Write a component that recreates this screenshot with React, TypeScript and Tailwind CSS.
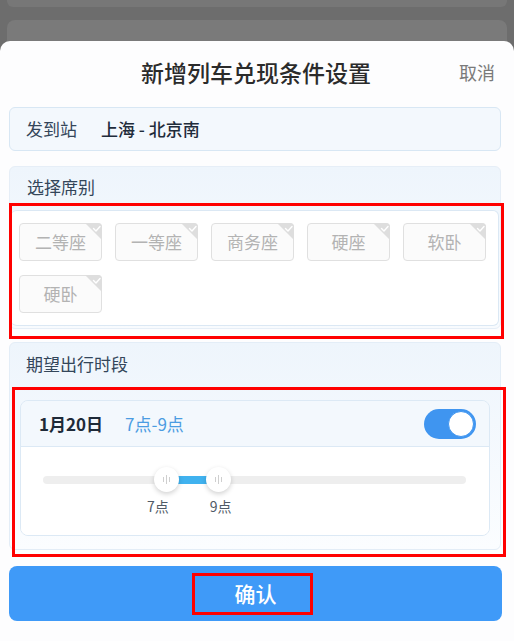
import React from "react";

const seats = ["二等座", "一等座", "商务座", "硬座", "软卧", "硬卧"];

const SeatChip = ({ label }: { label: string }) => {
  return (
    <div className="relative w-[83px] h-[38px] flex items-center justify-center rounded-[4px] border border-[#e0e0e0] bg-[#fbfbfb] text-[17px] text-[#b3b3b3]">
      {label}
      {/* corner tick */}
      <svg className="absolute top-[-1px] right-[-1px]" width="17" height="17" viewBox="0 0 17 17">
        <path d="M0 0 H13 Q17 0 17 4 V17 Z" fill="#dedede" />
        <path d="M8.5 5.5 L11 8 L15 3.5" fill="none" stroke="#ffffff" strokeWidth="1.4" strokeLinecap="round" strokeLinejoin="round" />
      </svg>
    </div>
  );
};

const Thumb = () => {
  return (
    <div className="w-[25px] h-[25px] shrink-0 rounded-full bg-white shadow-[0_2px_5px_rgba(0,0,0,0.18)] flex items-center justify-center gap-[2px] z-10">
      <span className="w-px h-[5px] bg-[#cfcfcf]" />
      <span className="w-px h-[9px] bg-[#cfcfcf]" />
      <span className="w-px h-[5px] bg-[#cfcfcf]" />
    </div>
  );
};

const App = () => {
  return (
    <div
      className="relative w-[514px] h-[641px] overflow-hidden bg-[#6d6d6d] flex flex-col"
      style={{ fontFamily: '"Noto Sans CJK SC", "Noto Sans", sans-serif' }}
    >
      {/* Backdrop cards */}
      <div className="h-[7px] mx-[7px] bg-[#777777] rounded-b-md" />
      <div className="h-[13px]" />
      <div className="h-[22px] mx-[7px] bg-[#7a7a7a] rounded-t-lg" />

      {/* Sheet */}
      <div className="flex-1 bg-[#fdfdfe] rounded-t-[10px] pl-[9px] pr-[13px] -mt-[1px]">
        {/* Header */}
        <div className="grid grid-cols-[1fr_auto_1fr] items-center pt-[17px] pb-[21px]">
          <div />
          <div className="text-[23px] leading-[28px] font-medium text-[#2b2b2b] pl-[2px]">新增列车兑现条件设置</div>
          <div className="flex justify-end pr-[6px] text-[18px] leading-[28px] text-[#7a7a7a]">取消</div>
        </div>

        {/* Station */}
        <div className="h-[44px] flex items-center gap-[24px] pl-[16px] rounded-[6px] border border-[#d8e7f4] bg-[#f3f8fd]">
          <span className="text-[17px] text-[#34465a]">发到站</span>
          <span className="text-[17px] font-medium text-[#1f2c3b]">上海 - 北京南</span>
        </div>

        {/* Seats */}
        <div className="mt-[15px] rounded-[6px] border border-[#e6eef7] bg-gradient-to-b from-[#eef5fc] to-[#f8fbfe] px-[1px] pb-[2px]">
          <div className="h-[43px] flex items-center pl-[16px] pb-[4px] text-[17px] text-[#34465a]">选择席别</div>
          <div className="rounded-[6px] border-t border-r border-b border-[#dbe8f4] bg-white px-[8px] py-[12px] flex flex-wrap gap-x-[13px] gap-y-[14px]">
            {seats.map((s) => (
              <SeatChip key={s} label={s} />
            ))}
          </div>
        </div>

        {/* Time range */}
        <div className="mt-[13px] rounded-[6px] border border-[#e3edf7] bg-gradient-to-b from-[#eef5fc] to-[#fbfdff] px-[10px] pb-[13px]">
          <div className="h-[44px] flex items-center pl-[6px] pb-[2px] text-[17px] text-[#34465a]">期望出行时段</div>
          <div className="mt-[13px] rounded-[8px] border border-[#dce9f5] overflow-hidden">
            <div className="h-[46px] flex items-center pl-[18px] pr-[13px] bg-[#f3f8fd] border-b border-[#dce9f5]">
              <span className="text-[17px] font-bold text-[#1e2a38]">1月20日</span>
              <span className="ml-[22px] text-[17px] text-[#4b9ce2]">7点-9点</span>
              <div className="ml-auto w-[52px] h-[30px] rounded-full bg-[#3f95f0] flex items-center justify-end pr-[2px]">
                <div className="w-[26px] h-[26px] rounded-full bg-white border border-[#3f95f0]" />
              </div>
            </div>
            <div className="h-[88px] bg-white pl-[22px] pr-[23px] pt-[20px]">
              <div className="flex items-center h-[25px]">
                <div className="w-[113px] h-[8px] rounded-l-full bg-[#eeeeee] -mr-[2px]" />
                <Thumb />
                <div className="w-[29px] h-[8px] bg-[#40b2ef] -mx-[1px]" />
                <Thumb />
                <div className="flex-1 h-[8px] rounded-r-full bg-[#eeeeee] -ml-[2px]" />
              </div>
              <div className="flex mt-[4px] text-[14px] leading-[20px] text-[#505a66]">
                <span className="ml-[104px]">7点</span>
                <span className="ml-[41px]">9点</span>
              </div>
            </div>
          </div>
        </div>

        {/* Confirm */}
        <button className="mt-[16px] w-[493px] h-[55px] rounded-[8px] bg-[#3f9af8] text-white text-[21px] font-medium flex items-center justify-center">
          确认
        </button>
      </div>

      {/* Annotation boxes */}
      <div className="absolute left-[9px] top-[203px] w-[495px] h-[136px] border-[3px] border-[#ff0000] pointer-events-none" />
      <div className="absolute left-[12px] top-[387px] w-[494px] h-[170px] border-[3px] border-[#ff0000] pointer-events-none" />
      <div className="absolute left-[192px] top-[573px] w-[121px] h-[42px] border-[3px] border-[#ff0000] pointer-events-none" />
    </div>
  );
};

export default App;
